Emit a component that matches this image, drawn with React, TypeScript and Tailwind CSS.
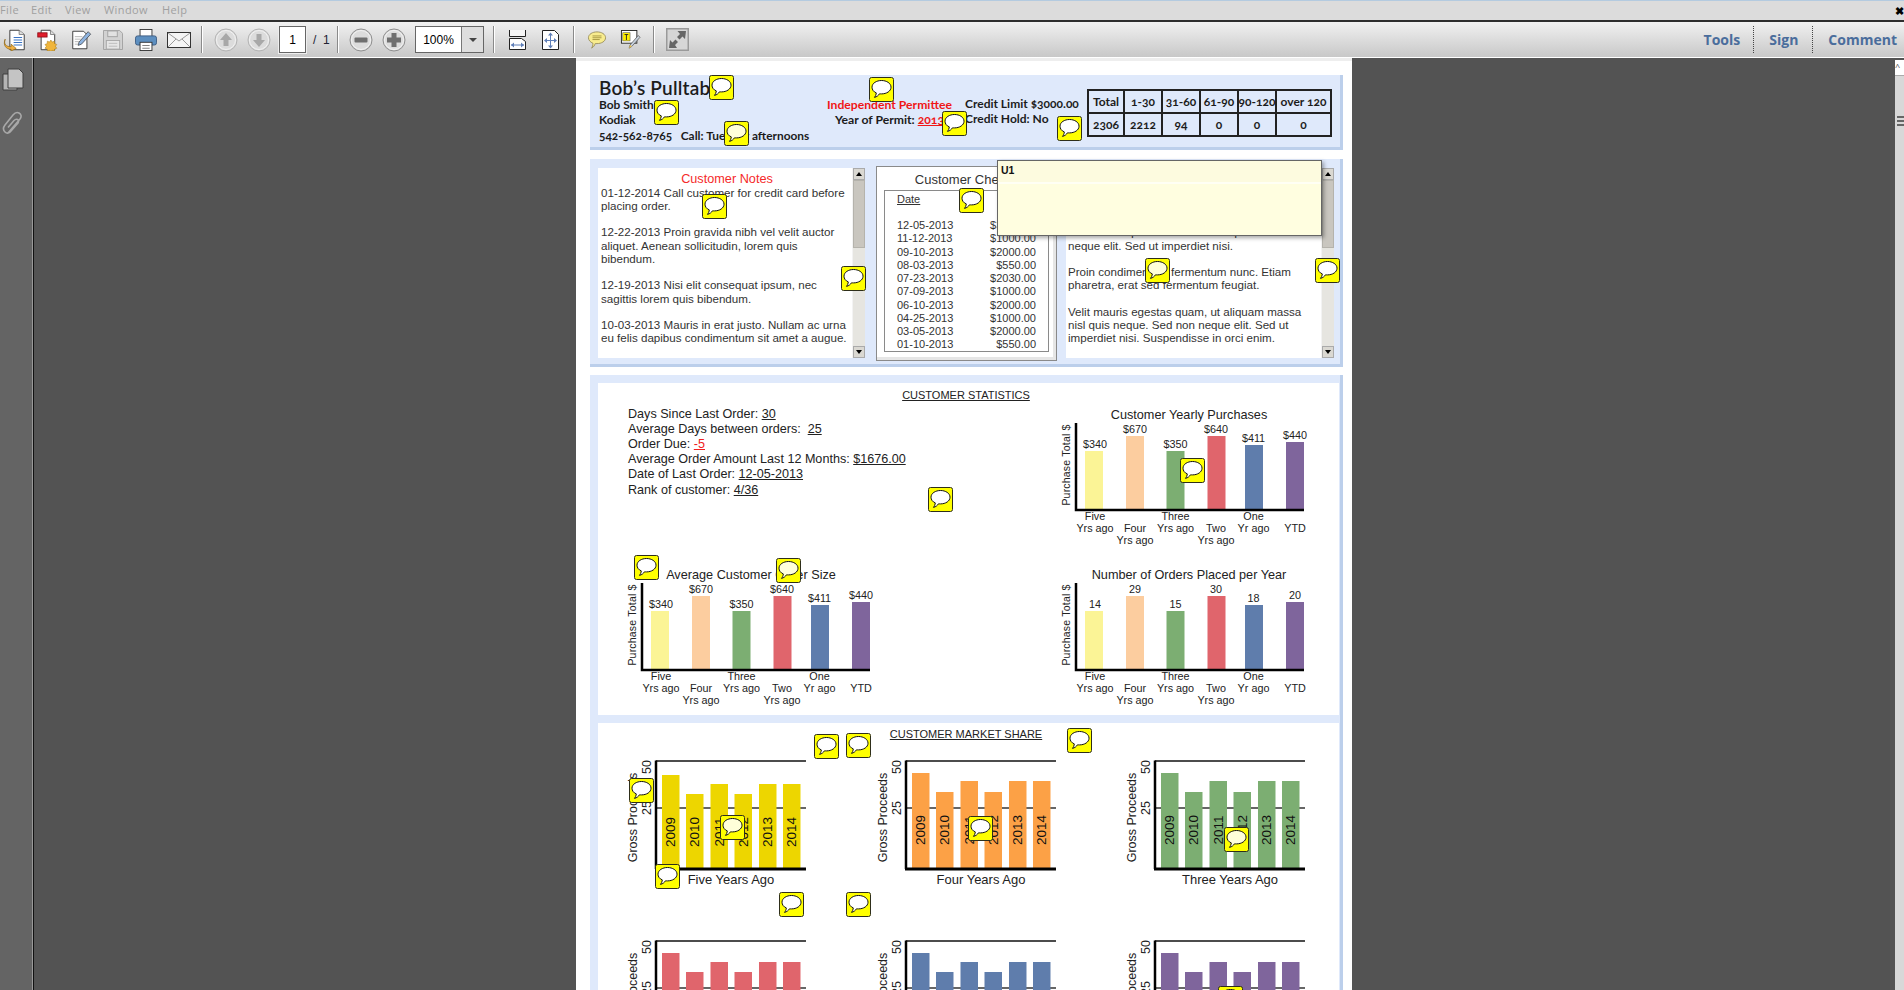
import React from "react";

const arial = { fontFamily: '"Liberation Sans", Arial, sans-serif' };

const SEP = () => <div className="w-[2px] h-[27px] bg-[#8a8a8a] border-r border-white shrink-0" />;

function OpenIcon() {
  return (
    <svg width="23" height="22" viewBox="0 0 26 26" className="shrink-0">
      <path d="M7.500 1.500h11l6 5v18h-17z" fill="#fff" stroke="#222" />
      <path d="M18.500 1.500v5h6" fill="#ddd" stroke="#777" />
      <path d="M12 10h10M12 13h10M12 16h10M12 19h10" stroke="#3b74c4" strokeWidth="1.200" />
      <path d="M2 12c-2 6 1 9 7 9v-3l6 5-6 3v-2C3 24-1 19 2 12z" fill="#f2b144" stroke="#8a6210" strokeWidth=".8" />
    </svg>
  );
}

function CreateIcon() {
  return (
    <svg width="23" height="22" viewBox="0 0 24 26" className="shrink-0">
      <path d="M4.500 1.500h11l5 5v18h-16z" fill="#fff" stroke="#222" />
      <path d="M15.500 1.500v5h5" fill="#ddd" stroke="#777" />
      <rect x="0.500" y="4.500" width="11" height="5" fill="#e01d2b" stroke="#8f1018" />
      <path d="M16 13l1.600 2.400 2.600-1 .2 2.900 2.600 1-1.700 2.200 1.700 2.200-2.600 1-.2 2.400-2.600-.8-1.600 1.200-1.600-1.200-2.600.8-.2-2.400-2.600-1 1.700-2.200-1.700-2.200 2.600-1 .2-2.900 2.600 1z" fill="#f0b53a" stroke="#a67811" strokeWidth=".6" />
    </svg>
  );
}

function EditIcon() {
  return (
    <svg width="21" height="20" viewBox="0 0 24 24" className="shrink-0">
      <path d="M1.500 1.500h13l4 4v17h-17z" fill="#fff" stroke="#222" />
      <path d="M4 8h9M4 11h7M4 14h5M4 17h4" stroke="#aaa" />
      <path d="M20 2l3 3-11 12-4 1.500 1-4z" fill="#8fb4e0" stroke="#333" strokeWidth=".8" />
    </svg>
  );
}

function SaveIcon() {
  return (
    <svg width="20" height="20" viewBox="0 0 21 21" className="shrink-0">
      <path d="M.5.5h17l3 3v17H.5z" fill="#d2d2d2" stroke="#a2a2a2" />
      <rect x="5" y="1" width="10" height="6" fill="#e2e2e2" stroke="#a2a2a2" />
      <rect x="3.500" y="11" width="14" height="9" fill="#e6e6e6" stroke="#a8a8a8" />
      <path d="M6 14h9M6 17h9" stroke="#bbb" />
    </svg>
  );
}

function PrintIcon() {
  return (
    <svg width="22" height="22" viewBox="0 0 24 24" className="shrink-0">
      <rect x="5.500" y="0.500" width="13" height="8" fill="#fff" stroke="#333" />
      <rect x="0.500" y="7.500" width="23" height="10" rx="2.500" fill="#5d8fc0" stroke="#3a5a80" />
      <rect x="5.500" y="14.500" width="13" height="9" fill="#fff" stroke="#333" />
      <path d="M8 18h8M8 21h8" stroke="#777" />
    </svg>
  );
}

function MailIcon() {
  return (
    <svg width="24" height="16" viewBox="0 0 24 16" className="shrink-0">
      <rect x="0.500" y="0.500" width="23" height="15" fill="#f5f5f5" stroke="#333" />
      <path d="M1 1l11 8 11-8M1 15l8-8M23 15l-8-8" fill="none" stroke="#9a9a9a" />
    </svg>
  );
}

function RoundBtn({ kind }: { kind: "up" | "down" | "minus" | "plus" }) {
  const dis = kind === "up" || kind === "down";
  const c = dis ? "#a8a8a8" : "#6f6f6f";
  return (
    <svg width="24" height="24" viewBox="0 0 24 24" className="shrink-0">
      <circle cx="12" cy="12" r="11" fill="#dcdcdc" stroke={dis ? "#b4b4b4" : "#8f8f8f"} />
      <circle cx="12" cy="12" r="9.500" fill="none" stroke="#f2f2f2" />
      {kind === "up" && <path d="M12 5l6 7h-3.500v6h-5v-6H6z" fill={c} />}
      {kind === "down" && <path d="M12 19l6-7h-3.500V6h-5v6H6z" fill={c} />}
      {kind === "minus" && <rect x="5.500" y="9.500" width="13" height="5" rx="1" fill={c} />}
      {kind === "plus" && <path d="M9.500 5h5v4.500H19v5h-4.500V19h-5v-4.500H5v-5h4.500z" fill={c} />}
    </svg>
  );
}

function FitWidth() {
  return (
    <svg width="17" height="20" viewBox="0 0 17 20" className="shrink-0 block">
      <path d="M.5 0v6.500h16V0" fill="#f5f5f5" stroke="#222" />
      <path d="M.5 8.500h12l4 3v8H.5z" fill="#fff" stroke="#222" />
      <path d="M2 15h13" stroke="#5f7fb8" />
      <path d="M2 15l3-2.500v5zM15 15l-3-2.500v5z" fill="#5f7fb8" />
    </svg>
  );
}

function FitPage() {
  return (
    <svg width="17" height="20" viewBox="0 0 17 20" className="shrink-0 block">
      <path d="M.5.5h12l4 4v15H.5z" fill="#fff" stroke="#222" />
      <path d="M3 10.500h11M8.500 4v13" stroke="#5f7fb8" />
      <path d="M8.500 2.500L6 5.500h5zM8.500 18.500L6 15.500h5zM2 10.500l3-2.500v5zM15 10.500l-3-2.500v5z" fill="#5f7fb8" />
    </svg>
  );
}

function CommentIcon() {
  return (
    <svg width="20" height="18" viewBox="0 0 20 20" className="shrink-0 block">
      <path d="M10 1c5 0 9.500 2.500 9.500 6.500S15 14 10 14c-1 0-1.500 0-2 0-.5 2-2 4-4 5 1-1.500 1.500-3 1.400-5.500C2.500 12.500.5 10 .5 7.500.5 3.500 5 1 10 1z" fill="#f8ec8e" stroke="#9a8f5a" />
      <path d="M5 5.500h10M5 7.500h10M5 9.500h8" stroke="#8d7d2a" strokeWidth=".8" />
    </svg>
  );
}

function NoteIcon() {
  return (
    <svg width="21" height="20" viewBox="0 0 21 22" className="shrink-0 block">
      <rect x="0.500" y="0.500" width="17" height="14" fill="#fff" stroke="#222" />
      <rect x="2" y="3" width="8" height="9" fill="#ffee00" stroke="#555" strokeWidth=".6" />
      <path d="M4 5h4M6 5v6" stroke="#222" />
      <path d="M19 6l2 2-9 10-3 2 1-3.500z" fill="#c6d0dc" stroke="#555" strokeWidth=".8" />
      <path d="M9 20l1-3.500 2 1.500z" fill="#f2c64a" />
    </svg>
  );
}

function ExpandIcon() {
  return (
    <svg width="23" height="23" viewBox="0 0 23 23" className="shrink-0 block">
      <rect x="0.750" y="0.750" width="21.500" height="21.500" fill="#d6d6d6" stroke="#9a9a9a" strokeWidth="1.500" />
      <path d="M20 3l-1 8-2.500-2.500-3 3-2.500-2.500 3-3L11.500 3zM3 20l1-8 2.500 2.500 3-3 2.500 2.500-3 3L11 20z" fill="#666" />
    </svg>
  );
}

function Menu() {
  const items: [string, string][] = [
    ["File", "w-[31px]"],
    ["Edit", "w-[34px]"],
    ["View", "w-[39px]"],
    ["Window", "w-[58px]"],
    ["Help", "w-[30px]"],
  ];
  return (
    <div className="h-[19px] bg-[#dcdcdc] flex items-center relative shrink-0" style={{ fontFamily: '"Open Sans", sans-serif' }}>
      {items.map(([t, w]) => (
        <span key={t} className={`${w} text-[11px] text-[#a0a0a0] tracking-[0.4px]`}>{t}</span>
      ))}
      <span className="ml-auto text-[11px] font-bold text-black leading-none">✖</span>
    </div>
  );
}

function Toolbar() {
  return (
    <div className="h-[38px] shrink-0 border-t-[2px] border-t-[#2e2e2e] border-b border-b-white bg-gradient-to-b from-[#f1f1f1] to-[#c8c8c8] flex items-center">
      <div className="flex items-center w-[36px] pl-[3px] shrink-0"><OpenIcon /></div>
      <div className="flex items-center w-[35px] shrink-0"><CreateIcon /></div>
      <div className="flex items-center w-[32px] shrink-0"><EditIcon /></div>
      <div className="flex items-center w-[32px] shrink-0"><SaveIcon /></div>
      <div className="flex items-center w-[32px] shrink-0"><PrintIcon /></div>
      <div className="flex items-center w-[34px] shrink-0"><MailIcon /></div>
      <SEP />
      <div className="ml-[11px] flex items-center gap-[9px]"><RoundBtn kind="up" /><RoundBtn kind="down" /></div>
      <div className="ml-[8px] w-[27px] h-[27px] bg-white border border-[#666] outline outline-1 outline-[#eee] flex items-center justify-center text-[12px] text-black" style={arial}>1</div>
      <div className="ml-[7px] w-[24px] text-[12px] text-[#223] whitespace-pre" style={arial}>/  1</div>
      <SEP />
      <div className="ml-[10px] flex items-center gap-[9px]"><RoundBtn kind="minus" /><RoundBtn kind="plus" /></div>
      <div className="ml-[9px] w-[69px] h-[27px] bg-white border border-[#666] flex items-stretch text-[12px] text-black" style={arial}>
        <div className="flex-1 flex items-center justify-center">100%</div>
        <div className="w-[22px] bg-[#dedede] border-l border-[#777] flex items-center justify-center">
          <div className="w-0 h-0 border-x-[4px] border-x-transparent border-t-[4px] border-t-[#444]" />
        </div>
      </div>
      <div className="w-[9px]" />
      <SEP />
      <div className="ml-[14px]"><FitWidth /></div>
      <div className="ml-[16px]"><FitPage /></div>
      <div className="ml-[14px]"><SEP /></div>
      <div className="ml-[12px]"><CommentIcon /></div>
      <div className="ml-[13px]"><NoteIcon /></div>
      <div className="ml-[12px]"><SEP /></div>
      <div className="ml-[11px]"><ExpandIcon /></div>
      <div className="ml-auto flex items-center text-[14px] font-bold text-[#4a6d9c] h-[27px]" style={{ fontFamily: '"Open Sans", sans-serif' }}>
        <span className="pr-[13px]">Tools</span>
        <div className="h-full border-l border-dotted border-[#444]" />
        <span className="pl-[15px] pr-[14px]">Sign</span>
        <div className="h-full border-l border-dotted border-[#444]" />
        <span className="pl-[15px] pr-[7px]">Comment</span>
      </div>
    </div>
  );
}

function SideBar() {
  return (
    <div className="w-[34px] shrink-0 bg-[#646464] border-r border-r-[#111] shadow-[inset_-1px_0_0_#9a9a9a] flex flex-col items-start pt-[10px] pl-[2px] gap-[20px]">
      <svg width="22" height="23" viewBox="0 0 22 23">
        <path d="M1 6h14v16H1z" fill="#b4b4b4" stroke="#3f3f3f" />
        <path d="M6 1h11l4 4v15H6z" fill="#c4c4c4" stroke="#3f3f3f" />
      </svg>
      <svg width="21" height="24" viewBox="0 0 21 24">
        <path d="M6 22L18 8c2-2.500 1-5-1-6s-4-.5-6 2L3 14c-2 2.500-2 5 0 7s4.500 1 6-1l7-8c1-1.500.500-3-.5-3.500s-2.500 0-3.500 1l-6 7" fill="none" stroke="#a8a8a8" strokeWidth="1.600" />
      </svg>
    </div>
  );
}

function RightBar() {
  return (
    <div className="w-[10px] shrink-0 flex flex-col mt-[2px] pl-[1px]">
      <div className="flex-1 bg-[#d8d8d8] flex flex-col">
        <div className="h-[16px] bg-white border-b border-[#aaa] text-[9px] leading-[14px] text-[#555] overflow-hidden">^</div>
        <div className="mt-[40px] ml-[2px] flex flex-col gap-[2px]">
          <div className="h-[2px] bg-[#666]" />
          <div className="h-[2px] bg-[#666]" />
          <div className="h-[2px] bg-[#666]" />
        </div>
      </div>
    </div>
  );
}

function AnnotIcon({ x, y, dim }: { x: number; y: number; dim?: boolean }) {
  return (
    <svg width="25" height="25" viewBox="0 0 25 25" className="absolute" style={{ left: x - 576, top: y - 58 }}>
      <rect x="0.500" y="0.500" width="24" height="24" rx="2" fill="#ffff00" stroke="#2e2e1a" />
      <path
        d="M12.500 3.500c5 0 9.500 2.700 9.500 6.700s-4.500 6.700-9.500 6.700c-.8 0-1.300 0-2-.1-1 1.600-2.600 3-5 3.600 1-1.200 1.700-2.600 1.800-4.500C4.500 14.800 3 12.600 3 10.200 3 6.200 7.500 3.500 12.500 3.500z"
        fill="#fff"
        fillOpacity={dim ? 0.85 : 1}
        stroke="#111"
        strokeWidth="1"
      />
    </svg>
  );
}

function Scrollbar() {
  return (
    <div className="w-[13px] h-full shrink-0 flex flex-col bg-[#e6e5e0] border-l border-[#f3f3f3]">
      <div className="h-[12px] bg-[#dad8d2] border border-[#aaa] flex items-center justify-center">
        <div className="w-0 h-0 border-x-[3px] border-x-transparent border-b-[4px] border-b-black" />
      </div>
      <div className="h-[68px] bg-[#c9c6bf] border border-[#b5b3ac]" />
      <div className="flex-1" />
      <div className="h-[12px] bg-[#dad8d2] border border-[#aaa] flex items-center justify-center">
        <div className="w-0 h-0 border-x-[3px] border-x-transparent border-t-[4px] border-t-black" />
      </div>
    </div>
  );
}

function HeaderPanel() {
  const tableRows = [
    ["Total", "1-30", "31-60", "61-90", "90-120", "over 120"],
    ["2306", "2212", "94", "0", "0", "0"],
  ];
  return (
    <div
      className="h-[75px] bg-[#dfe9fb] border-b-[3px] border-r-[3px] border-[#bccfeb] flex text-[#1c1c1c] shrink-0 whitespace-nowrap"
      style={{ fontFamily: 'Lato, "Open Sans", sans-serif' }}
    >
      <div className="w-[230px] pl-[9px] font-bold text-[11.900px] shrink-0 oldstyle-nums">
        <div className="text-[19px] font-semibold leading-[26px] h-[22px] tracking-[0.2px]">Bob’s Pulltabs</div>
        <div className="leading-[15px]">Bob Smith</div>
        <div className="leading-[15px]">Kodiak</div>
        <div className="leading-[17px] whitespace-pre">542-562-8765   Call: Tuesday afternoons</div>
      </div>
      <div className="pt-[22px] font-bold text-[12.200px] w-[145px] pr-[6px] shrink-0 leading-[15px] text-center">
        <div className="text-[#f01616]">Independent Permittee</div>
        <div>
          Year of Permit: <span className="text-[#f01616] underline oldstyle-nums">2013</span>
        </div>
      </div>
      <div className="pt-[20.500px] font-bold text-[12px] leading-[15px] w-[122px] shrink-0 oldstyle-nums">
        <div>Credit Limit $3000.00</div>
        <div>Credit Hold: No</div>
      </div>
      <div className="mt-[14px] w-[245px] h-[48px] border-2 border-[#222] flex flex-col font-bold text-[12px] shrink-0 oldstyle-nums">
        {tableRows.map((r, i) => (
          <div key={i} className={`flex-1 grid grid-cols-[36px_38px_38px_38px_38px_1fr] ${i === 0 ? "border-b-2 border-b-[#222]" : ""}`}>
            {r.map((c, j) => (
              <div key={j} className={`flex items-center justify-center ${j < 5 ? "border-r-2 border-r-[#222]" : ""}`}>{c}</div>
            ))}
          </div>
        ))}
      </div>
    </div>
  );
}

function Notes() {
  return (
    <div className="w-[267px] h-[190px] bg-white flex shrink-0" style={arial}>
      <div className="flex-1 pl-[3px] pr-[1px] pt-[4px] text-[11.600px] leading-[13.250px] text-[#333] whitespace-nowrap">
        <div className="text-center text-[12.700px] text-[#f52a2a] h-[13.500px] leading-[15.500px] pl-[2px]">Customer Notes</div>
        <p>01-12-2014 Call customer for credit card before<br />placing order.</p>
        <p className="mt-[13.250px]">12-22-2013 Proin gravida nibh vel velit auctor<br />aliquet. Aenean sollicitudin, lorem quis<br />bibendum.</p>
        <p className="mt-[13.250px]">12-19-2013 Nisi elit consequat ipsum, nec<br />sagittis lorem quis bibendum.</p>
        <p className="mt-[13.250px]">10-03-2013 Mauris in erat justo. Nullam ac urna<br />eu felis dapibus condimentum sit amet a augue.</p>
      </div>
      <Scrollbar />
    </div>
  );
}

function Checks() {
  const rows: [string, string][] = [
    ["12-05-2013", "$3000.00"],
    ["11-12-2013", "$1000.00"],
    ["09-10-2013", "$2000.00"],
    ["08-03-2013", "$550.00"],
    ["07-23-2013", "$2030.00"],
    ["07-09-2013", "$1000.00"],
    ["06-10-2013", "$2000.00"],
    ["04-25-2013", "$1000.00"],
    ["03-05-2013", "$2000.00"],
    ["01-10-2013", "$550.00"],
  ];
  return (
    <div className="w-[181px] h-[195px] -mt-[2px] border border-[#8a8a8a] bg-white shadow-[inset_-3px_-3px_0_#e6e6e6] flex flex-col items-center shrink-0 text-[11px] text-[#333]" style={arial}>
      <div className="text-[13px] h-[23px] pt-[5px] leading-[15px]">Customer Checks</div>
      <div className="w-[165px] h-[162px] border border-[#8a8a8a] pl-[12px] pr-[12px] pt-[2px]">
        <div className="flex justify-between leading-[13px]">
          <span className="underline">Date</span>
          <span className="underline">Amount</span>
        </div>
        <div className="mt-[13px] flex flex-col">
          {rows.map(([d, a]) => (
            <div key={d} className="flex justify-between leading-[13.250px]">
              <span>{d}</span>
              <span>{a}</span>
            </div>
          ))}
        </div>
      </div>
    </div>
  );
}

function RightNotes() {
  return (
    <div className="w-[268px] h-[190px] bg-white flex shrink-0" style={arial}>
      <div className="flex-1 pl-[2px] pt-[4px] text-[11.600px] leading-[13.250px] text-[#333] whitespace-nowrap">
        <div className="text-center text-[12.700px] text-[#f52a2a] h-[13.500px] leading-[13.500px]">Customer Notes</div>
        <p>Velit mauris egestas quam, ut aliquam massa<br />nisl quis neque.</p>
        <p className="mt-[13.250px]">Sed non neque elit. Sed non neque elit. Sed ut<br />neque elit. Sed ut imperdiet nisi.</p>
        <p className="mt-[13.250px]">Proin condimentum fermentum nunc. Etiam<br />pharetra, erat sed fermentum feugiat.</p>
        <p className="mt-[13.250px]">Velit mauris egestas quam, ut aliquam massa<br />nisl quis neque. Sed non neque elit. Sed ut<br />imperdiet nisi. Suspendisse in orci enim.</p>
      </div>
      <Scrollbar />
    </div>
  );
}

const COLORS = ["#fbf496", "#fccd9f", "#7cae72", "#e0656c", "#5f7dac", "#7f659c"];
const LABELS = [
  { x: 39, lines: ["Five", "Yrs ago"], y: 0 },
  { x: 79, lines: ["Four", "Yrs ago"], y: 1 },
  { x: 119.500, lines: ["Three", "Yrs ago"], y: 0 },
  { x: 160, lines: ["Two", "Yrs ago"], y: 1 },
  { x: 197.500, lines: ["One", "Yr ago"], y: 0 },
  { x: 239, lines: ["YTD"], y: 1 },
];
const BARX = [29, 70, 110.500, 151.500, 189, 230];
const TOPS = [46, 31, 46, 31, 40, 37];

function StatChart({ title, values, titleX = 133 }: { title: string; values: string[]; titleX?: number }) {
  return (
    <svg width="256" height="145" viewBox="0 0 256 145" className="block shrink-0" style={arial}>
      <text x={titleX} y="13.500" textAnchor="middle" fontSize="12.700" fill="#222">{title}</text>
      <text transform="translate(13.500 60) rotate(-90)" textAnchor="middle" fontSize="10.500" letterSpacing=".2" fill="#222">Purchase Total $</text>
      {BARX.map((x, i) => (
        <g key={i}>
          <rect x={x} y={TOPS[i]} width="18" height={105 - TOPS[i]} fill={COLORS[i]} />
          <text x={LABELS[i].x} y={TOPS[i] - 3} textAnchor="middle" fontSize="10.800" fill="#222">{values[i]}</text>
          {LABELS[i].lines.map((l, k) => (
            <text key={l} x={LABELS[i].x} y={114.500 + (LABELS[i].y + k) * 12} textAnchor="middle" fontSize="10.800" fill="#222">{l}</text>
          ))}
        </g>
      ))}
      <path d="M20 18v87H248" fill="none" stroke="#000" strokeWidth="2.500" />
    </svg>
  );
}

function ShareChart({ color, tops, title, yearY }: { color: string; tops: number[]; title?: string; yearY: number }) {
  const xs = [37, 61, 85.500, 109.500, 134, 158];
  const yrs = ["2009", "2010", "2011", "2012", "2013", "2014"];
  return (
    <svg width="249.700" height="180" viewBox="0 0 249.700 180" className="block" style={arial}>
      <text transform="translate(12 67.500) rotate(-90)" textAnchor="middle" fontSize="12.500" fill="#222">Gross Proceeds</text>
      <text transform="translate(26.500 17) rotate(-90)" textAnchor="middle" fontSize="12.500" fill="#222">50</text>
      <text transform="translate(26.500 58) rotate(-90)" textAnchor="middle" fontSize="12.500" fill="#222">25</text>
      <path d="M31 58H181" stroke="#333" strokeWidth="1.500" />
      {xs.map((x, i) => (
        <rect key={i} x={x} y={tops[i]} width="17.500" height={119 - tops[i]} fill={color} />
      ))}
      <path d="M181 11H31" fill="none" stroke="#111" strokeWidth="1.500" />
      <path d="M30 119H181" stroke="#000" strokeWidth="3" />
      <path d="M31 10.500V119" stroke="#000" strokeWidth="2.500" />
      {xs.map((x, i) => (
        <text key={i} transform={`translate(${x + 13.500} ${yearY}) rotate(-90)`} textAnchor="middle" fontSize="13.500" fill="#111">{yrs[i]}</text>
      ))}
      {title && <text x="106" y="134" textAnchor="middle" fontSize="13" fill="#222">{title}</text>}
    </svg>
  );
}

function Stats() {
  const rows: [string, string, string?][] = [
    ["Days Since Last Order: ", "30"],
    ["Average Days between orders:  ", "25"],
    ["Order Due: ", "-5", "text-[#f02020]"],
    ["Average Order Amount Last 12 Months: ", "$1676.00"],
    ["Date of Last Order: ", "12-05-2013"],
    ["Rank of customer: ", "4/36"],
  ];
  return (
    <div className="h-[332px] bg-white shrink-0 flex flex-col text-[#222]" style={arial}>
      <div className="h-[22px] text-center text-[11px] leading-[24px] underline pr-[5px]">CUSTOMER STATISTICS</div>
      <div className="flex justify-between h-[160px] pl-[30px] pr-[27px]">
        <div className="text-[12.600px] leading-[15.200px] whitespace-pre pt-[1.500px]">
          {rows.map(([a, b, c]) => (
            <div key={a}>{a}<span className={`underline ${c ?? ""}`}>{b}</span></div>
          ))}
        </div>
        <StatChart title="Customer Yearly Purchases" values={["$340", "$670", "$350", "$640", "$411", "$440"]} />
      </div>
      <div className="flex justify-between pl-[24px] pr-[27px]">
        <StatChart title="Average Customer Order Size" titleX={129} values={["$340", "$670", "$350", "$640", "$411", "$440"]} />
        <StatChart title="Number of Orders Placed per Year" values={["14", "29", "15", "30", "18", "20"]} />
      </div>
    </div>
  );
}

function Market() {
  const t1 = [25, 44, 34, 44, 34, 34];
  const t2 = [23, 42, 31, 42, 31, 31];
  const t3 = [23, 42, 32, 42, 32, 32];
  return (
    <div className="mt-[8px] flex-1 bg-white flex flex-col text-[#222]" style={arial}>
      <div className="h-[27px] text-center text-[11px] leading-[22px] underline pr-[5px]">CUSTOMER MARKET SHARE</div>
      <div className="grid grid-cols-[repeat(3,249.700px)] pl-[27px]">
        <ShareChart color="#edd600" tops={t1} title="Five Years Ago" yearY={82} />
        <ShareChart color="#fca146" tops={t2} title="Four Years Ago" yearY={80} />
        <ShareChart color="#7cae72" tops={t2} title="Three Years Ago" yearY={80} />
        <ShareChart color="#e0656c" tops={t3} yearY={80} />
        <ShareChart color="#5f7dac" tops={t3} yearY={80} />
        <ShareChart color="#7f659c" tops={t3} yearY={80} />
      </div>
    </div>
  );
}

const ICONS: [number, number, boolean?][] = [
  [709, 75], [654, 100], [724, 121, true], [869, 77], [942, 111], [1057, 116],
  [702, 194], [841, 266], [959, 188], [1145, 258, true], [1315, 258],
  [928, 487], [1180, 458], [634, 555], [776, 558, true],
  [814, 734], [846, 733], [1067, 728], [629, 778], [720, 815, true], [968, 816], [1224, 827, true],
  [655, 864], [779, 892], [846, 892], [1218, 986],
];

export default function App() {
  return (
    <div className="w-[1904px] h-[990px] flex flex-col overflow-hidden bg-[#535353] border-t border-t-[#b4cbe0]">
      <Menu />
      <Toolbar />
      <div className="flex-1 flex min-h-0">
        <SideBar />
        <div className="flex-1 flex justify-center">
          <div className="w-[776px] h-[932px] bg-white relative overflow-hidden border-t-[3px] border-t-[#eeeeee] pt-[14px] pl-[14px] pr-[9px] flex flex-col">
            <HeaderPanel />
            <div className="mt-[9px] h-[208px] bg-[#dfe9fb] border-b-[3px] border-r-[3px] border-[#bccfeb] pt-[9px] pl-[8px] flex items-start shrink-0">
              <Notes />
              <div className="w-[11px] shrink-0" />
              <Checks />
              <div className="w-[9px] shrink-0" />
              <RightNotes />
            </div>
            <div className="mt-[8px] flex-1 bg-[#dfe9fb] border-r-[3px] border-[#bccfeb] pt-[8px] pl-[8px] pr-[1px] flex flex-col min-h-0">
              <Stats />
              <Market />
            </div>
            <div className="absolute left-[421px] top-[99px] w-[325px] h-[76px] bg-[#fffee0] border border-[#666] shadow-[2px_2px_4px_rgba(0,0,0,0.35)]" style={arial}>
              <div className="h-[23px] bg-[#fdfbdf] border-b-[2px] border-b-[#fffff4] pl-[3px] text-[10.500px] font-bold leading-[18px] text-[#111]">U1</div>
            </div>
            {ICONS.map(([x, y, d]) => (
              <div key={`${x}-${y}`} className="contents">
                <AnnotIcon x={x} y={y - 3} dim={d} />
              </div>
            ))}
          </div>
        </div>
        <RightBar />
      </div>
    </div>
  );
}
